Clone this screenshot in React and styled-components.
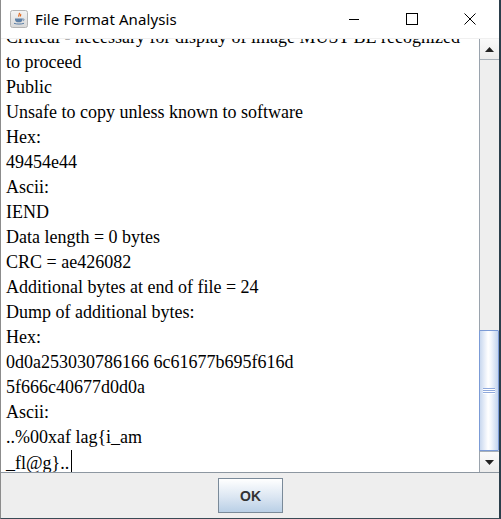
import React from 'react';
import styled, { createGlobalStyle } from 'styled-components';

const GlobalStyle = createGlobalStyle`
  html, body {
    margin: 0;
    padding: 0;
    background: #1f3340;
  }
`;

const Window = styled.div`
  width: 501px;
  height: 519px;
  box-sizing: border-box;
  display: flex;
  flex-direction: column;
  background: #fff;
  border-left: 1px solid #8c8c8c;
  border-right: 2px solid #2b3e4b;
  border-bottom: 1px solid #3a4a55;
  overflow: hidden;
`;

const TitleBar = styled.div`
  height: 38px;
  flex: none;
  display: flex;
  align-items: center;
  background: #fff;
  font-family: "Noto Sans", "Open Sans", sans-serif;
  font-size: 15px;
  letter-spacing: 0.1px;
  color: #000;
`;

const AppIcon = styled.div`
  width: 18px;
  height: 18px;
  margin-left: 9px;
  margin-right: 7px;
  display: flex;
`;

const Title = styled.div`
  flex: 1;
  padding-bottom: 1px;
`;

const Control = styled.div`
  width: 58px;
  height: 38px;
  display: flex;
  align-items: center;
  justify-content: center;
`;

const Content = styled.div`
  flex: 1;
  display: flex;
  min-height: 0;
  border-top: 1px solid #f0f0f0;
`;

const TextPane = styled.div`
  flex: 1;
  display: flex;
  flex-direction: column;
  justify-content: flex-end;
  overflow: hidden;
  padding-left: 5px;
  font-family: "Liberation Serif", "Times New Roman", serif;
  font-size: 18px;
  line-height: 25px;
  color: #000;
`;

const Lines = styled.div`
  margin-bottom: -4px;
`;

const Line = styled.div`
  white-space: pre;
`;

const Caret = styled.span`
  display: inline-block;
  width: 1px;
  height: 25px;
  margin-left: 2px;
  background: #000;
  vertical-align: -6px;
`;

const ScrollBar = styled.div`
  width: 19px;
  flex: none;
  display: flex;
  flex-direction: column;
  border-left: 1px solid #9aa3ad;
  background: #eeeeee;
`;

const ArrowButton = styled.div`
  height: 20px;
  flex: none;
  display: flex;
  align-items: center;
  justify-content: center;
  background: linear-gradient(#fafafa, #ececec);
  border-top: ${p => (p.$down ? '1px solid #a8b0b8' : 'none')};
  border-bottom: ${p => (p.$down ? 'none' : '1px solid #a8b0b8')};
`;

const Track = styled.div`
  flex: 1;
  display: flex;
  flex-direction: column;
  justify-content: flex-end;
`;

const Thumb = styled.div`
  height: 121px;
  margin-left: -1px;
  box-sizing: border-box;
  border: 1px solid #7b9bd6;
  border-radius: 1px;
  background: linear-gradient(90deg, #c9d8ef, #ffffff 45%, #f4f8fd 60%, #c3d4ee);
  display: flex;
  flex-direction: column;
  align-items: center;
  justify-content: center;
  gap: 1px;
`;

const Grip = styled.div`
  width: 12px;
  height: 1px;
  background: #8fa9dc;
  box-shadow: 0 1px 0 #fff;
`;

const ButtonBar = styled.div`
  height: 45px;
  flex: none;
  display: flex;
  align-items: center;
  justify-content: center;
  background: #eeeeee;
  border-top: 1px solid #8d97a1;
  padding-left: 1px;
`;

const OkButton = styled.button`
  width: 65px;
  height: 35px;
  border: 1px solid #7a8a99;
  border-radius: 0;
  background: linear-gradient(#ffffff, #dbe6f2 55%, #b9cfe6);
  font-family: "Liberation Sans", Arial, sans-serif;
  font-weight: bold;
  font-size: 14px;
  color: #333;
  padding: 0;
`;

const lines = [
  'Critical - necessary for display of image MUST BE recognized',
  'to proceed',
  'Public',
  'Unsafe to copy unless known to software',
  'Hex:',
  '49454e44',
  'Ascii:',
  'IEND',
  'Data length = 0 bytes',
  'CRC = ae426082',
  'Additional bytes at end of file = 24',
  'Dump of additional bytes:',
  'Hex:',
  '0d0a253030786166 6c61677b695f616d',
  '5f666c40677d0d0a',
  'Ascii:',
  '..%00xaf lag{i_am',
];

const JavaIcon = () => (
  <svg width="18" height="18" viewBox="0 0 18 18">
    <defs>
      <linearGradient id="ib" x1="0" y1="0" x2="0" y2="1">
        <stop offset="0" stopColor="#f4f4f4" />
        <stop offset="1" stopColor="#d8d8d8" />
      </linearGradient>
    </defs>
    <rect x="0.5" y="0.5" width="17" height="17" rx="2" fill="url(#ib)" stroke="#b4b4b4" />
    <path d="M9 3c1.5 1.2-1.2 2.2 0 3.6M10.5 4c.8.8-.6 1.4.2 2.4" stroke="#e2661a" strokeWidth="1.2" fill="none" />
    <path d="M5 8.5h7.5v1.2c0 1.6-1.6 2.6-3.7 2.6S5 11.3 5 9.7z" fill="#5c7fa6" />
    <path d="M12.5 9h1c.8 0 .8 1.6-.4 1.8" stroke="#5c7fa6" strokeWidth="0.9" fill="none" />
    <path d="M4 13.3c2.5 1 7.5 1 10 0" stroke="#5c7fa6" strokeWidth="1" fill="none" />
  </svg>
);

const App = () => (
  <>
    <GlobalStyle />
    <Window>
      <TitleBar>
        <AppIcon><JavaIcon /></AppIcon>
        <Title>File Format Analysis</Title>
        <Control>
          <svg width="12" height="12" viewBox="0 0 12 12">
            <path d="M1 6.5h10" stroke="#000" strokeWidth="1" />
          </svg>
        </Control>
        <Control>
          <svg width="12" height="12" viewBox="0 0 12 12">
            <rect x="0.5" y="0.5" width="11" height="11" fill="none" stroke="#000" strokeWidth="1" />
          </svg>
        </Control>
        <Control>
          <svg width="12" height="12" viewBox="0 0 12 12">
            <path d="M0.5 0.5l11 11M11.5 0.5l-11 11" stroke="#000" strokeWidth="1" />
          </svg>
        </Control>
      </TitleBar>
      <Content>
        <TextPane>
          <Lines>
            {lines.map((l, i) => <Line key={i}>{l}</Line>)}
            <Line>_fl@g}..<Caret /></Line>
          </Lines>
        </TextPane>
        <ScrollBar>
          <ArrowButton>
            <svg width="9" height="5" viewBox="0 0 9 5"><path d="M0 5h9L4.5 0z" fill="#222" /></svg>
          </ArrowButton>
          <Track>
            <Thumb>
              <Grip />
              <Grip />
              <Grip />
            </Thumb>
          </Track>
          <ArrowButton $down>
            <svg width="9" height="5" viewBox="0 0 9 5"><path d="M0 0h9L4.5 5z" fill="#222" /></svg>
          </ArrowButton>
        </ScrollBar>
      </Content>
      <ButtonBar>
        <OkButton>OK</OkButton>
      </ButtonBar>
    </Window>
  </>
);

export default App;
